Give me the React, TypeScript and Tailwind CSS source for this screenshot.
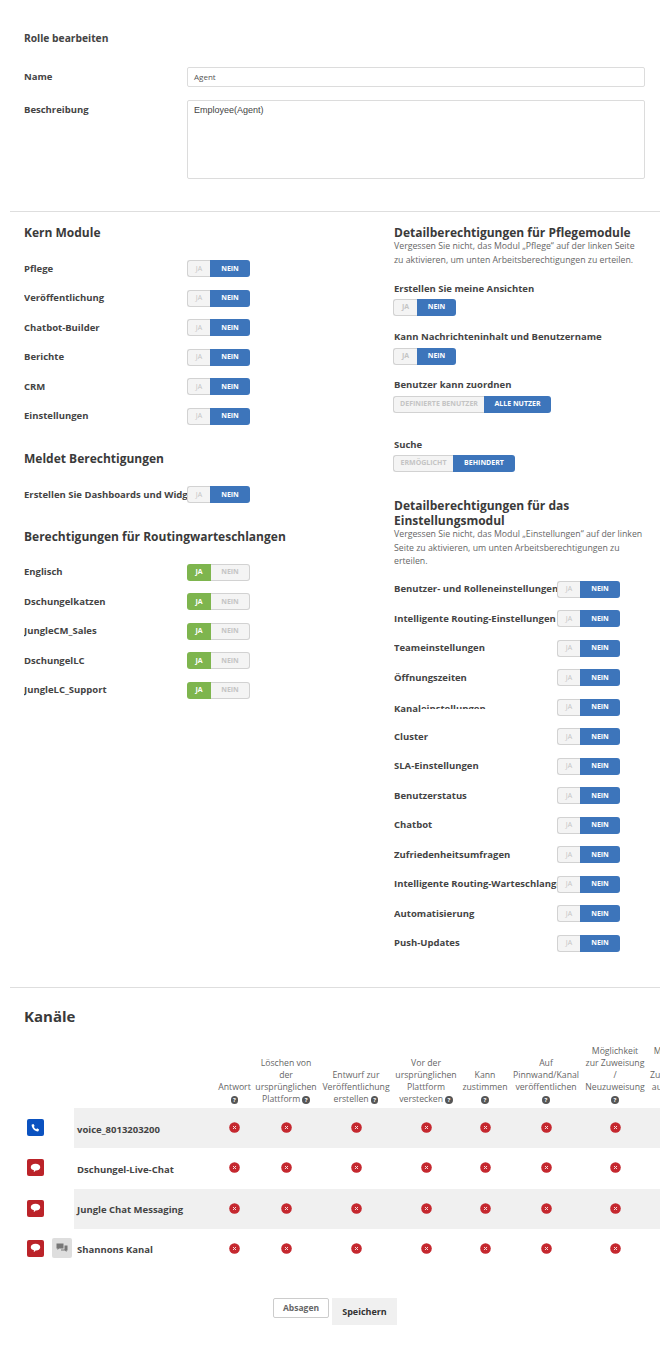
import { ReactNode } from 'react'

const coreModules = ['Pflege', 'Veröffentlichung', 'Chatbot-Builder', 'Berichte', 'CRM', 'Einstellungen']
const queues = ['Englisch', 'Dschungelkatzen', 'JungleCM_Sales', 'DschungelLC', 'JungleLC_Support']
const settings = [
  'Benutzer- und Rolleneinstellungen',
  'Intelligente Routing-Einstellungen',
  'Teameinstellungen',
  'Öffnungszeiten',
  'KANAL',
  'Cluster',
  'SLA-Einstellungen',
  'Benutzerstatus',
  'Chatbot',
  'Zufriedenheitsumfragen',
  'Intelligente Routing-Warteschlangen',
  'Automatisierung',
  'Push-Updates',
]

const columns = [
  { lines: ['Antwort'], help: 'below' },
  { lines: ['Löschen von', 'der', 'ursprünglichen', 'Plattform'], help: 'inline' },
  { lines: ['Entwurf zur', 'Veröffentlichung', 'erstellen'], help: 'inline' },
  { lines: ['Vor der', 'ursprünglichen', 'Plattform', 'verstecken'], help: 'inline' },
  { lines: ['Kann', 'zustimmen'], help: 'below' },
  { lines: ['Auf', 'Pinnwand/Kanal', 'veröffentlichen'], help: 'below' },
  { lines: ['Möglichkeit', 'zur Zuweisung', '/', 'Neuzuweisung'], help: 'below' },
  { lines: ['Möglichkeit', 'zur', 'Zuweisungen', 'automatisch'], help: 'below' },
]

const channels = [
  { name: 'voice_8013203200', kind: 'voice', shaded: true },
  { name: 'Dschungel-Live-Chat', kind: 'chat', shaded: false },
  { name: 'Jungle Chat Messaging', kind: 'chat', shaded: true },
  { name: 'Shannons Kanal', kind: 'chat', shaded: false, group: true },
]

const gridCols = 'grid grid-cols-[64px_140px_41px_62px_78px_62px_56px_66px_72px_52px] w-[693px]'
const segBase = 'h-full flex items-center justify-center font-bold'
const offSeg = 'border-[#d2d2d2] bg-[#f4f4f4] text-[#c4c4c4]'

function Toggle({ on = false }: { on?: boolean }) {
  if (on) {
    return (
      <div className="flex h-[17px] w-[63px] shrink-0 text-[7px]">
        <span className={`${segBase} w-[24px] rounded-l-[3px] bg-[#7eb54e] text-white`}>JA</span>
        <span className={`${segBase} ${offSeg} flex-1 border border-l-0 rounded-r-[3px]`}>NEIN</span>
      </div>
    )
  }
  return (
    <div className="flex h-[17px] w-[63px] shrink-0 text-[7px]">
      <span className={`${segBase} ${offSeg} w-[23px] border border-r-0 rounded-l-[3px] !font-normal`}>JA</span>
      <span className={`${segBase} flex-1 rounded-r-[3px] bg-[#3d75bb] text-white`}>NEIN</span>
    </div>
  )
}

function Segmented({ className, leftClass, left, right }: { className: string; leftClass: string; left: string; right: string }) {
  return (
    <div className={`flex h-[17px] -ml-px text-[7px] ${className}`}>
      <span className={`${segBase} ${offSeg} ${leftClass} border border-r-0 rounded-l-[3px]`}>{left}</span>
      <span className={`${segBase} flex-1 rounded-r-[3px] bg-[#3d75bb] text-white`}>{right}</span>
    </div>
  )
}

function Row({ label, on }: { label: ReactNode; on?: boolean }) {
  return (
    <div className="flex items-center h-[29.5px]">
      <div className="w-[163px] overflow-hidden whitespace-nowrap text-[9.5px] font-bold text-[#444]">{label}</div>
      <Toggle on={on} />
    </div>
  )
}

function Heading({ children }: { children: ReactNode }) {
  return <h2 className="text-[12px] leading-[15px] font-bold text-[#3a3a3a]">{children}</h2>
}

function Hint({ children }: { children: ReactNode }) {
  return <p className="text-[8.75px] leading-[13.5px] text-[#666] whitespace-nowrap">{children}</p>
}

function SmallLabel({ children }: { children: ReactNode }) {
  return <div className="text-[9.5px] leading-[14px] font-bold text-[#444] whitespace-nowrap overflow-hidden w-[208px]">{children}</div>
}

function HelpIcon() {
  return (
    <span className="inline-flex w-[7.5px] h-[7.5px] rounded-full bg-[#555] text-white text-[6px] leading-none font-bold items-center justify-center">
      ?
    </span>
  )
}

function Denied() {
  return (
    <svg width="11" height="11" viewBox="0 0 11 11" className="block">
      <circle cx="5.5" cy="5.5" r="5.3" fill="#c5282f" />
      <path d="M4 4l3 3M7 4l-3 3" stroke="#f6dcdc" strokeWidth="1" />
    </svg>
  )
}

function ChannelIcon({ kind }: { kind: string }) {
  if (kind === 'voice') {
    return (
      <div className="w-[17px] h-[17px] rounded-[2px] bg-[#0b52c0] flex items-center justify-center">
        <svg width="9" height="9" viewBox="0 0 24 24" fill="#fff">
          <path d="M6.600 2.500l3.200 5.200-2.200 2.400c1.200 2.800 3.500 5.100 6.300 6.300l2.400-2.200 5.200 3.200-1.400 4c-.3.700-1 1.100-1.800 1C9.500 21.300 2.700 14.500 1.600 5.700c-.1-.8.300-1.500 1-1.800z" />
        </svg>
      </div>
    )
  }
  return (
    <div className="w-[17px] h-[17px] rounded-[2px] bg-[#bb2329] flex items-center justify-center">
      <svg width="11" height="10" viewBox="0 0 22 20" fill="#fff">
        <path d="M11 1.500c5.500 0 9.500 2.900 9.500 6.800 0 3.900-4 6.700-8.500 6.700h-1c-.6 1.500-2 2.800-3.800 3.200.6-1 .8-2.200.7-3.700C4 13.500 1.500 11.200 1.500 8.300 1.500 4.400 5.500 1.500 11 1.500z" />
      </svg>
    </div>
  )
}

function GroupIcon() {
  return (
    <div className="w-[20px] h-[20px] -mt-[2px] rounded-[2px] bg-[#dedede] flex items-center justify-center">
      <svg width="12" height="10" viewBox="0 0 24 20" fill="#777">
        <path d="M1 1h14v10H6l-3 3v-3H1z" />
        <path d="M17 5h6v10h-2v3l-3-3h-8v-2h7z" />
      </svg>
    </div>
  )
}

export default function App() {
  return (
    <div className="w-[665px] h-[1348px] bg-white overflow-hidden font-['Open_Sans',sans-serif] text-[#444]">
      <div className="pl-[24px] pr-[20px] pt-[31px]">
        <h1 className="text-[10.25px] leading-[15px] font-bold">Rolle bearbeiten</h1>
        <div className="flex items-center mt-[21px] h-[20px]">
          <label className="w-[163px] text-[9.5px] font-bold">Name</label>
          <div className="flex-1 h-full border border-[#dcdcdc] rounded-[2px] px-[6px] text-[8px] leading-[18px] text-[#555]">Agent</div>
        </div>
        <div className="flex mt-[13px] h-[79px]">
          <label className="w-[163px] text-[9.5px] leading-[20px] font-bold">Beschreibung</label>
          <div className="flex-1 h-full border border-[#dcdcdc] rounded-[2px] px-[6px] pt-[3px] text-[9px] leading-[13px] text-[#444] font-['Liberation_Sans',sans-serif]">
            Employee(Agent)
          </div>
        </div>
      </div>

      <div className="ml-[10px] w-[650px] h-[1px] bg-[#dedede] mt-[32px]" />

      <div className="flex pl-[24px] pt-[13px] h-[775px]">
        <div className="w-[370px]">
          <Heading>Kern Module</Heading>
          <div className="mt-[14px]">
            {coreModules.map((m) => (
              <Row key={m} label={m} />
            ))}
          </div>
          <div className="mt-[20px]">
            <Heading>Meldet Berechtigungen</Heading>
          </div>
          <div className="mt-[14px]">
            <Row label="Erstellen Sie Dashboards und Widgets" />
          </div>
          <div className="mt-[19px]">
            <Heading>Berechtigungen für Routingwarteschlangen</Heading>
          </div>
          <div className="mt-[14px]">
            {queues.map((q) => (
              <Row key={q} label={q} on />
            ))}
          </div>
        </div>

        <div className="w-[250px]">
          <Heading>Detailberechtigungen für Pflegemodule</Heading>
          <Hint>
            Vergessen Sie nicht, das Modul „Pflege“ auf der linken Seite
            <br />
            zu aktivieren, um unten Arbeitsberechtigungen zu erteilen.
          </Hint>

          <div className="mt-[15px]">
            <SmallLabel>Erstellen Sie meine Ansichten</SmallLabel>
            <div className="mt-[3px]">
              <Segmented className="w-[63px]" leftClass="w-[24px]" left="JA" right="NEIN" />
            </div>
          </div>
          <div className="mt-[14px]">
            <SmallLabel>Kann Nachrichteninhalt und Benutzernamen</SmallLabel>
            <div className="mt-[4px]">
              <Segmented className="w-[63px]" leftClass="w-[24px]" left="JA" right="NEIN" />
            </div>
          </div>
          <div className="mt-[13px]">
            <SmallLabel>Benutzer kann zuordnen</SmallLabel>
            <div className="mt-[4px]">
              <Segmented className="w-[158px]" leftClass="w-[91px]" left="DEFINIERTE BENUTZER" right="ALLE NUTZER" />
            </div>
          </div>
          <div className="mt-[25px]">
            <SmallLabel>Suche</SmallLabel>
            <div className="mt-[3px]">
              <Segmented className="w-[122px]" leftClass="w-[60px]" left="ERMÖGLICHT" right="BEHINDERT" />
            </div>
          </div>

          <div className="mt-[26px]">
            <Heading>
              Detailberechtigungen für das
              <br />
              Einstellungsmodul
            </Heading>
            <Hint>
              Vergessen Sie nicht, das Modul „Einstellungen“ auf der linken
              <br />
              Seite zu aktivieren, um unten Arbeitsberechtigungen zu
              <br />
              erteilen.
            </Hint>
          </div>
          <div className="mt-[6px]">
            {settings.map((s) => (
              <Row
                key={s}
                label={
                  s === 'KANAL' ? (
                    <span className="block h-[11px]">
                      Kanal
                      <span className="inline-block h-[7px] overflow-hidden align-top leading-[14px]">einstellungen</span>
                    </span>
                  ) : (
                    s
                  )
                }
              />
            ))}
          </div>
        </div>
      </div>

      <div className="ml-[10px] w-[650px] h-[1px] bg-[#dedede]" />

      <div className="ml-[10px] w-[650px] overflow-hidden">
        <h2 className="ml-[14px] mt-[19px] text-[15px] leading-[18px] font-bold text-[#3a3a3a]">Kanäle</h2>

        <div className={`${gridCols} mt-[20px] items-end`}>
          <div />
          <div />
          {columns.map((c, i) => (
            <div key={i} className="text-center text-[8.7px] leading-[12px] text-[#666] whitespace-nowrap flex flex-col items-center">
              {c.lines.map((l, j) => (
                <div key={j}>
                  {l}
                  {c.help === 'inline' && j === c.lines.length - 1 && (
                    <>
                      {' '}
                      <HelpIcon />
                    </>
                  )}
                </div>
              ))}
              {c.help === 'below' && (
                <div>
                  <HelpIcon />
                </div>
              )}
            </div>
          ))}
        </div>

        <div className="mt-[3px]">
          {channels.map((ch) => (
            <div key={ch.name} className={`${gridCols} h-[40.3px]`}>
              <div className="flex items-start pt-[11px] pl-[17px] gap-[8px]">
                <ChannelIcon kind={ch.kind} />
                {ch.group && <GroupIcon />}
              </div>
              <div className={`flex items-center pl-[3px] pt-[3px] text-[9.5px] font-bold text-[#444] whitespace-nowrap ${ch.shaded ? 'bg-[#f0f0f0]' : ''}`}>
                {ch.name}
              </div>
              {columns.map((_, i) => (
                <div key={i} className={`flex justify-center pt-[14px] ${ch.shaded ? 'bg-[#f0f0f0]' : ''}`}>
                  <Denied />
                </div>
              ))}
            </div>
          ))}
        </div>
      </div>

      <div className="flex items-start pl-[273px] mt-[29px] gap-[3px]">
        <button type="button" className="w-[56px] h-[20px] border border-[#ccc] rounded-[2px] bg-white text-[8.5px] font-bold text-[#666]">
          Absagen
        </button>
        <button type="button" className="w-[65px] h-[27px] bg-[#f0f0f0] text-[9px] font-bold text-[#333]">
          Speichern
        </button>
      </div>
    </div>
  )
}
